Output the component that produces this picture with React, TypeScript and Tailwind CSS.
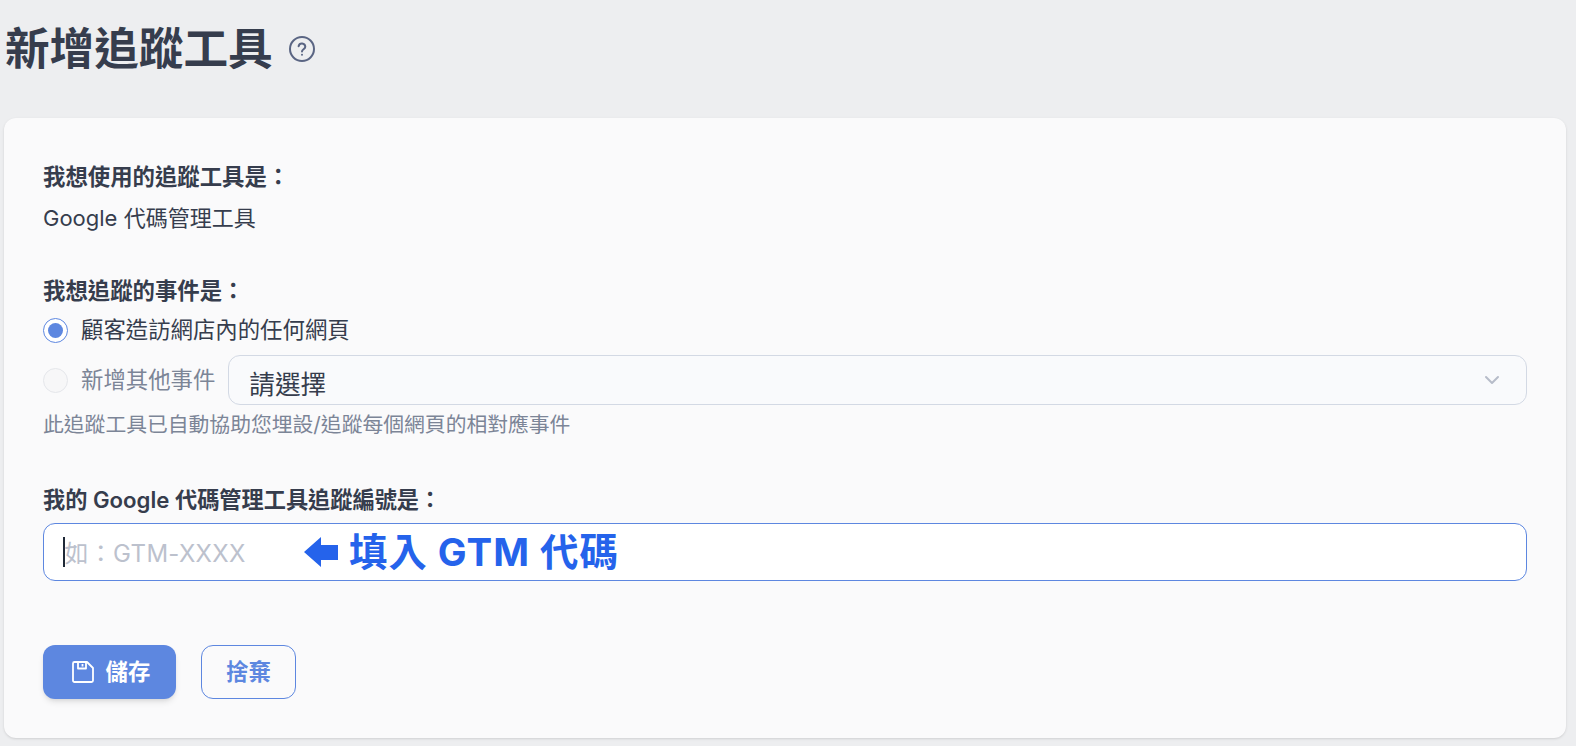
import { ChevronDown } from "lucide-react";

const font = "font-['Inter','Noto_Sans_CJK_TC',sans-serif]";

export default function App() {
  return (
    <div className={`${font} h-[746px] w-[1576px] overflow-hidden bg-[#edeef0] text-[#363d4d] antialiased`}>
      <header className="flex h-[118px] items-start pl-[5px] pt-[18px]">
        <h1 className="text-[44.6px] leading-[62px] font-bold text-[#363d4d]">新增追蹤工具</h1>
        <svg viewBox="0 0 26 26" className="ml-[16px] mt-[18px] h-[26px] w-[26px]" fill="none" stroke="#5a6583" strokeWidth="2">
          <circle cx="13" cy="13" r="12" />
          <path d="M9.6 10.2a3.4 3.4 0 0 1 6.7.6c0 2.3-3.3 2.6-3.3 4.6" strokeLinecap="round" />
          <circle cx="13" cy="18.8" r="1" fill="#5a6583" stroke="none" />
        </svg>
      </header>
      <main className="ml-1 flex h-[620px] w-[1562px] flex-col rounded-xl bg-[#fafafb] pl-[39px] pr-[39px] pt-[45px] shadow-sm">
        <p className="text-[22.4px] leading-[28px] font-semibold">我想使用的追蹤工具是：</p>
        <p className="mt-[13px] text-[22px] leading-[28px]">Google 代碼管理工具</p>

        <p className="mt-[45px] text-[22.4px] leading-[28px] font-semibold">我想追蹤的事件是：</p>
        <div className="mt-[11px] flex h-[28px] items-center gap-[13px]">
          <span className="flex h-[25px] w-[25px] items-center justify-center rounded-full border border-[#5d87e0] bg-white">
            <span className="h-[15px] w-[15px] rounded-full bg-[#5d87e0]" />
          </span>
          <span className="text-[22.4px] leading-[28px]">顧客造訪網店內的任何網頁</span>
        </div>
        <div className="mt-[11px] flex h-[50px] items-center">
          <span className="h-[25px] w-[25px] rounded-full border border-[#e5e7eb] bg-[#f7f7f8]" />
          <span className="ml-[13px] text-[22.4px] leading-[28px] text-[#7c8597]">新增其他事件</span>
          <div className="ml-[13px] flex h-[50px] flex-1 items-center justify-between rounded-xl border border-[#d3d9e4] bg-[#f9fafc] pl-[20px] pr-[22px]">
            <span className="pt-[10px] text-[25.6px] leading-[32px]">請選擇</span>
            <ChevronDown className="h-[24px] w-[24px] text-[#b7bcc9]" strokeWidth={2} />
          </div>
        </div>
        <p className="mt-[6px] text-[20.8px] leading-[28px] text-[#7c8597]">此追蹤工具已自動協助您埋設/追蹤每個網頁的相對應事件</p>

        <p className="mt-[47px] text-[22.2px] leading-[28px] font-semibold">我的 Google 代碼管理工具追蹤編號是：</p>
        <div className="relative mt-[9px] flex h-[58px] items-center rounded-xl border border-[#5d87e0] bg-white pl-[19px]">
          <span className="h-[30px] w-[1.5px] bg-[#1f2937]" />
          <span className="pt-[4px] text-[24px] leading-[32px] tracking-[0.3px] text-[#bcc1cd]">如：GTM-XXXX</span>
          <span className="absolute left-[260px] top-0 flex h-[56px] items-center gap-[11px] text-[38.4px] font-bold text-[#2563eb]">
            <svg viewBox="0 0 34 30" className="h-[30px] w-[34px]" fill="#2563eb">
              <path d="M0 15 17 0v8h17v15H17v7z" />
            </svg>
            <span className="leading-[56px] tracking-[1px]">填入 GTM 代碼</span>
          </span>
        </div>

        <div className="mt-[64px] flex items-center gap-[25px]">
          <button className="flex h-[54px] w-[133px] items-center justify-center gap-[11px] rounded-xl bg-[#5d87e0] pl-[2px] text-[22.4px] font-bold text-white shadow-md">
            <svg viewBox="0 0 24 24" className="h-[24px] w-[24px]" fill="none" stroke="currentColor" strokeWidth="1.8" strokeLinejoin="round">
              <path d="M2 3.5A1.5 1.5 0 0 1 3.5 2H16l6 6v12.5a1.5 1.5 0 0 1-1.5 1.5h-17A1.5 1.5 0 0 1 2 20.5z" />
              <path d="M7 2v6.5h8V2M11.5 4v2.5" />
            </svg>
            儲存
          </button>
          <button className="flex h-[54px] w-[95px] items-center justify-center rounded-xl border border-[#5d87e0] text-[22.4px] font-bold text-[#5d87e0]">
            捨棄
          </button>
        </div>
      </main>
    </div>
  );
}
